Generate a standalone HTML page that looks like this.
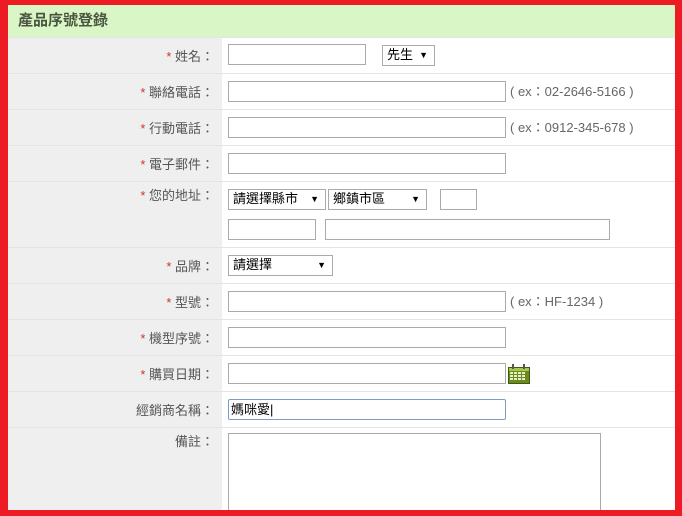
<!DOCTYPE html>
<html><head><meta charset="utf-8"><style>
*{margin:0;padding:0;box-sizing:border-box}
body{width:682px;height:516px;overflow:hidden;background:#ed1c24;position:relative;font-family:"Liberation Sans","Noto Sans CJK TC",sans-serif;font-size:13px;color:#555}
#p{position:absolute;left:8px;top:5px;width:667px;height:505px;background:#fff;overflow:hidden}
.hd{position:absolute;left:0;top:0;width:667px;height:32px;background:#d9f7c6;font-weight:bold;font-size:15px;color:#4a5540;padding:6px 0 0 10px;line-height:20px}
.row{position:absolute;left:0;width:667px;border-top:1px solid #e4e4e4}
.lab{position:absolute;left:0;top:0;bottom:0;width:214px;background:#efefef;text-align:right;padding-right:8px;color:#555;line-height:18px}
.s{color:#c33}
.a{position:absolute;border:1px solid #aaa;background:#fff}
.sel{position:absolute;border:1px solid #aaa;background:#fff;color:#000;font-size:13px;padding:0 4px;line-height:18px}
.sel:after{content:"▼";position:absolute;right:6px;top:0;font-size:9px}
.t{position:absolute;color:#666;font-size:13px;line-height:16px}
</style></head><body><div id="p">
<div class="hd">產品序號登錄</div>
<div class="row" style="top:32px;height:36px"><div class="lab" style="padding-top:10px"><span class="s">*</span> 姓名：</div></div>
<div class="row" style="top:68px;height:36px"><div class="lab" style="padding-top:10px"><span class="s">*</span> 聯絡電話：</div></div>
<div class="row" style="top:104px;height:36px"><div class="lab" style="padding-top:10px"><span class="s">*</span> 行動電話：</div></div>
<div class="row" style="top:140px;height:36px"><div class="lab" style="padding-top:10px"><span class="s">*</span> 電子郵件：</div></div>
<div class="row" style="top:176px;height:66px"><div class="lab" style="padding-top:5px"><span class="s">*</span> 您的地址：</div></div>
<div class="row" style="top:242px;height:36px"><div class="lab" style="padding-top:10px"><span class="s">*</span> 品牌：</div></div>
<div class="row" style="top:278px;height:36px"><div class="lab" style="padding-top:10px"><span class="s">*</span> 型號：</div></div>
<div class="row" style="top:314px;height:36px"><div class="lab" style="padding-top:10px"><span class="s">*</span> 機型序號：</div></div>
<div class="row" style="top:350px;height:36px"><div class="lab" style="padding-top:10px"><span class="s">*</span> 購買日期：</div></div>
<div class="row" style="top:386px;height:36px"><div class="lab" style="padding-top:10px">經銷商名稱：</div></div>
<div class="row" style="top:422px;height:90px"><div class="lab" style="padding-top:5px">備註：</div></div>

<div class="a" style="left:220px;top:39px;width:138px;height:21px"></div>
<div class="sel" style="left:374px;top:40px;width:53px;height:21px">先生</div>
<div class="a" style="left:220px;top:76px;width:278px;height:21px"></div>
<div class="t" style="left:502px;top:79px">( ex：02-2646-5166 )</div>
<div class="a" style="left:220px;top:112px;width:278px;height:21px"></div>
<div class="t" style="left:502px;top:115px">( ex：0912-345-678 )</div>
<div class="a" style="left:220px;top:148px;width:278px;height:21px"></div>
<div class="sel" style="left:220px;top:184px;width:98px;height:21px">請選擇縣市</div>
<div class="sel" style="left:320px;top:184px;width:99px;height:21px">鄉鎮市區</div>
<div class="a" style="left:432px;top:184px;width:37px;height:21px"></div>
<div class="a" style="left:220px;top:214px;width:88px;height:21px"></div>
<div class="a" style="left:317px;top:214px;width:285px;height:21px"></div>
<div class="sel" style="left:220px;top:250px;width:105px;height:21px">請選擇</div>
<div class="a" style="left:220px;top:286px;width:278px;height:21px"></div>
<div class="t" style="left:502px;top:289px">( ex：HF-1234 )</div>
<div class="a" style="left:220px;top:322px;width:278px;height:21px"></div>
<div class="a" style="left:220px;top:358px;width:278px;height:21px"></div>
<svg style="position:absolute;left:500px;top:359px" width="22" height="20" viewBox="0 0 22 20"><rect x="0.5" y="3.5" width="21" height="16" fill="#6a8a1f" stroke="#3e5a10"/><rect x="1" y="4" width="20" height="3" fill="#a8c84a"/><g fill="#e8f0c8"><rect x="2" y="8" width="3" height="2"/><rect x="6" y="8" width="3" height="2"/><rect x="10" y="8" width="3" height="2"/><rect x="14" y="8" width="3" height="2"/><rect x="2" y="11" width="3" height="2"/><rect x="6" y="11" width="3" height="2"/><rect x="10" y="11" width="3" height="2"/><rect x="14" y="11" width="3" height="2"/><rect x="2" y="14" width="3" height="2"/><rect x="6" y="14" width="3" height="2"/><rect x="10" y="14" width="3" height="2"/><rect x="14" y="14" width="3" height="2"/></g><rect x="4" y="0" width="2" height="5" fill="#555"/><rect x="15" y="0" width="2" height="5" fill="#555"/></svg>
<div class="a" style="left:220px;top:394px;width:278px;height:21px;border-color:#7a9cc6;border-radius:2px;color:#000;padding:0 2px;line-height:19px">媽咪愛|</div>
<div class="a" style="left:220px;top:428px;width:373px;height:82px"></div>
</div></body></html>
